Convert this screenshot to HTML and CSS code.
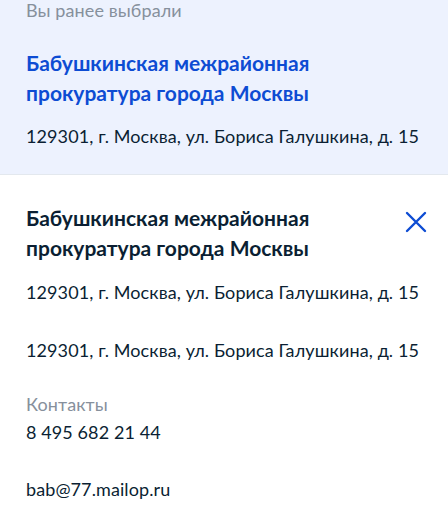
FILE: index.html
```html
<!DOCTYPE html>
<html lang="ru">
<head>
<meta charset="utf-8">
<link rel="stylesheet" href="styles.css">
</head>
<body>
<section class="prev">
  <div class="label">Вы ранее выбрали</div>
  <a class="title link">Бабушкинская межрайонная прокуратура города Москвы</a>
  <div class="text addr">129301, г. Москва, ул. Бориса Галушкина, д. 15</div>
</section>
<section class="card">
  <div class="head">
    <div class="title">Бабушкинская межрайонная прокуратура города Москвы</div>
    <button class="close" aria-label="Закрыть">
      <svg width="24" height="24" viewBox="0 0 24 24"><path d="M3 3 L21 21 M21 3 L3 21" stroke="#0d4cd3" stroke-width="2.4" stroke-linecap="round" fill="none"/></svg>
    </button>
  </div>
  <div class="text a1">129301, г. Москва, ул. Бориса Галушкина, д. 15</div>
  <div class="text a2">129301, г. Москва, ул. Бориса Галушкина, д. 15</div>
  <div class="contacts">
    <div class="label">Контакты</div>
    <div class="text phone">8 495 682 21 44</div>
    <div class="text mail">bab@77.mailop.ru</div>
  </div>
</section>
</body>
</html>
```
FILE: styles.css
```css
* { box-sizing: border-box; }
html, body { margin: 0; padding: 0; background: #fff; }
body {
  font-family: Lato, "Noto Sans", sans-serif;
  color: #0b1f33;
  width: 448px;
  overflow: hidden;
}
.prev {
  background: #edf2fe;
  border-bottom: 1px solid #e3e8ee;
  padding: 0 20px 26px 26px;
  margin-top: -2px;
  display: flex;
  flex-direction: column;
}
.label {
  font-size: 18px;
  line-height: 24px;
  color: #86909c;
  letter-spacing: 0.1px;
}
.title {
  font-size: 21px;
  line-height: 30px;
  font-weight: 700;
}
.link {
  color: #0d4cd3;
  margin-top: 26px;
  text-decoration: none;
}
.text {
  font-size: 18px;
  line-height: 24px;
  letter-spacing: 0.1px;
}
.addr { margin-top: 16px; }
.card {
  padding: 28px 20px 0 26px;
  display: flex;
  flex-direction: column;
}
.head {
  display: flex;
  align-items: flex-start;
  justify-content: space-between;
  gap: 16px;
}
.close {
  border: 0;
  background: none;
  padding: 0;
  margin-top: 7px;
  width: 24px;
  height: 24px;
  flex: none;
}
.close svg { display: block; }
.a1 { margin-top: 17px; }
.a2 { margin-top: 34px; }
.contacts { margin-top: 30px; display: flex; flex-direction: column; }
.phone { margin-top: 4px; }
.mail { margin-top: 33px; }
```
